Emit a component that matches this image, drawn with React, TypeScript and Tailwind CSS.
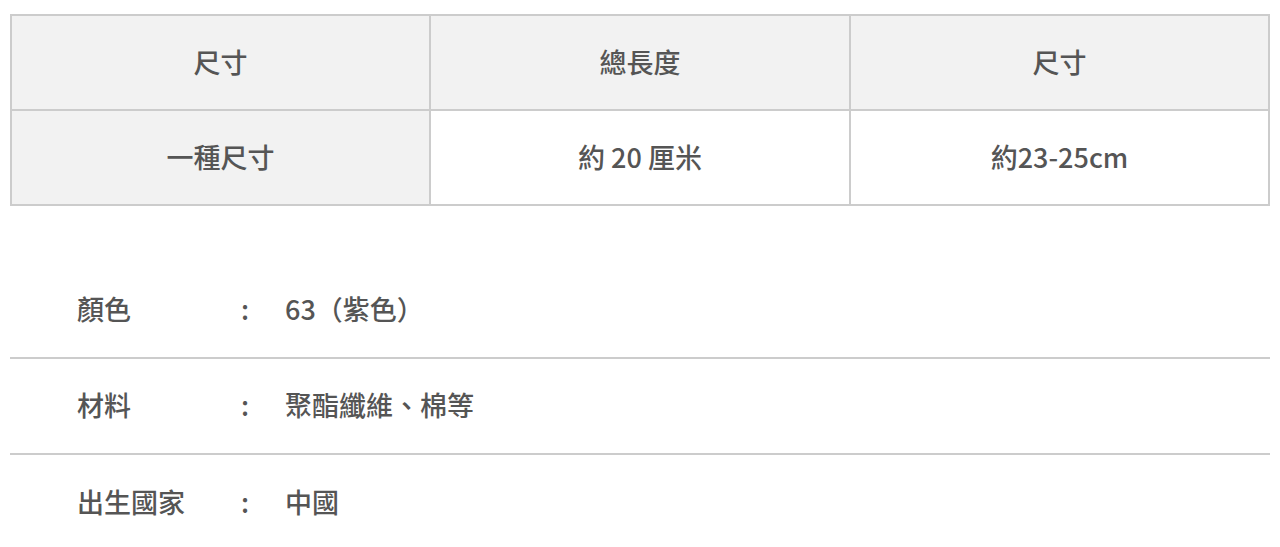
import React from "react";

const font = { fontFamily: '"Noto Sans CJK TC", "Noto Sans", sans-serif' };

export default function App() {
  const rows = [
    { label: "顏色", value: "63（紫色）" },
    { label: "材料", value: "聚酯纖維、棉等" },
    { label: "出生國家", value: "中國" },
  ];
  return (
    <div className="w-[1280px] h-[547px] bg-white overflow-hidden pt-[14px] px-[10px] text-[#555] font-medium text-[27px]" style={font}>
      <div className="grid grid-cols-[419px_420px_1fr] border-2 border-[#cccccc]">
        <div className="h-[95px] pb-[1px] flex items-center justify-center bg-[#f2f2f2] border-r-2 border-b-2 border-[#cccccc]">尺寸</div>
        <div className="h-[95px] pb-[1px] flex items-center justify-center bg-[#f2f2f2] border-r-2 border-b-2 border-[#cccccc]">總長度</div>
        <div className="h-[95px] pb-[1px] flex items-center justify-center bg-[#f2f2f2] border-b-2 border-[#cccccc]">尺寸</div>
        <div className="h-[93px] pb-[1px] flex items-center justify-center bg-[#f2f2f2] border-r-2 border-[#cccccc]">一種尺寸</div>
        <div className="h-[93px] pb-[1px] flex items-center justify-center bg-white border-r-2 border-[#cccccc]">約 20 厘米</div>
        <div className="h-[93px] pb-[1px] flex items-center justify-center bg-white">約23-25cm</div>
      </div>
      <div className="mt-[57px]">
        {rows.map((r, i) => (
          <div
            key={i}
            className={`h-[96px] pb-[1px] flex items-center pl-[67px] ${i < rows.length - 1 ? "border-b-2 border-[#cccccc]" : ""}`}
          >
            <span className="w-[164px]">{r.label}</span>
            <span className="w-[44px]">:</span>
            <span>{r.value}</span>
          </div>
        ))}
      </div>
    </div>
  );
}
